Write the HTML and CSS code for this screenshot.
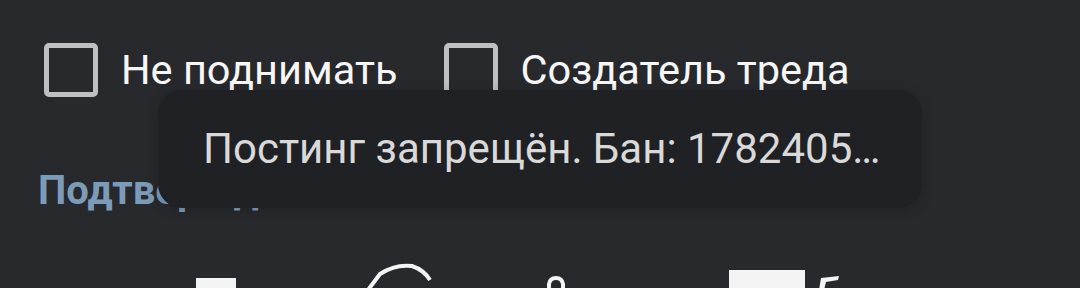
FILE: index.html
```html
<!DOCTYPE html>
<html lang="ru">
<head>
<meta charset="utf-8">
<link rel="stylesheet" href="styles.css">
</head>
<body>
<div class="screen">
  <div class="options">
    <label class="opt">
      <span class="box"></span>
      <span class="label">Не поднимать</span>
    </label>
    <label class="opt opt2">
      <span class="box"></span>
      <span class="label">Создатель треда</span>
    </label>
  </div>
  <div class="link">Подтверждение</div>
  <div class="captcha">
    <svg width="1080" height="40" viewBox="0 0 1080 40">
      <rect x="196" y="28" width="40" height="20" fill="#f4f4f4"/>
      <path d="M368 40 L380 24 Q395 14 412 16 Q424 20 430 30" fill="none" stroke="#f4f4f4" stroke-width="4"/>
      <path d="M549 40 L549 34 Q550 28 556 28 Q562 28 563 34 L563 40" fill="none" stroke="#f4f4f4" stroke-width="4"/>
      <rect x="729" y="20" width="76" height="30" fill="#f4f4f4"/>
      <path d="M819 40 L821 28 L839 26 L838 30 L826 32 L824 40 Z" fill="#f4f4f4"/>
    </svg>
  </div>
  <div class="toast">Постинг запрещён. Бан: 1782405…</div>
</div>
</body>
</html>
```
FILE: styles.css
```css
* { box-sizing: border-box; }
html, body {
  margin: 0;
  padding: 0;
  background: #28292d;
}
.screen {
  position: relative;
  width: 1080px;
  height: 288px;
  overflow: hidden;
  font-family: Roboto, "Noto Sans", sans-serif;
  padding-top: 43px;
}
.options {
  display: flex;
  align-items: center;
  padding-left: 44px;
  gap: 46px;
  height: 54px;
}
.opt {
  display: flex;
  align-items: center;
  gap: 23px;
}
.box {
  width: 54px;
  height: 54px;
  border: 5px solid #bfc0c2;
  border-radius: 5px;
  flex: none;
}
.label {
  color: #f7f7f7;
  font-size: 41.5px;
  line-height: 54px;
}
.link {
  margin-top: 72px;
  padding-left: 38px;
  color: #7c9bb8;
  font-weight: 700;
  font-size: 40px;
  line-height: 44px;
  white-space: nowrap;
}
.captcha {
  position: absolute;
  left: 0;
  top: 250px;
  width: 1080px;
  height: 40px;
}
.captcha svg { display: block; }
.toast {
  position: absolute;
  left: 158px;
  top: 90px;
  width: 764px;
  height: 118px;
  border-radius: 24px;
  background: #202124;
  box-shadow: 0 2px 14px rgba(0, 0, 0, 0.18);
  color: #d9d9da;
  font-size: 42px;
  line-height: 118px;
  padding-left: 45px;
  white-space: nowrap;
}
```
